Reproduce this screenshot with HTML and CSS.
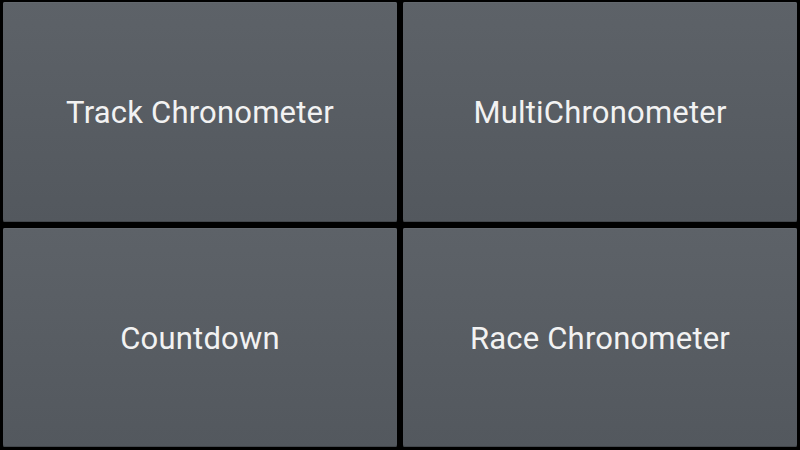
FILE: index.html
```html
<!DOCTYPE html>
<html>
<head>
    <title>Chronometer</title>
    <link rel="stylesheet" href="styles.css">
</head>
<body>
    <div class="menu">
        <button class="tile">Track Chronometer</button>
        <button class="tile">MultiChronometer</button>
        <button class="tile">Countdown</button>
        <button class="tile">Race Chronometer</button>
    </div>
</body>
</html>
```
FILE: styles.css
```css
html, body {
    margin: 0;
    height: 100%;
    background-color: #000;
}

body {
    font-family: Roboto, 'Noto Sans', sans-serif;
    padding: 2px 3px 3px 3px;
    box-sizing: border-box;
}

.menu {
    display: grid;
    grid-template-columns: 1fr 1fr;
    grid-template-rows: 1fr 1fr;
    gap: 6px;
    height: 100%;
}

.tile {
    border: none;
    border-radius: 2px;
    background: linear-gradient(to bottom, #5d6268, #53585e);
    box-shadow: inset 0 -1px 0 #43474c, inset 0 1px 0 #63686e;
    color: #f2f2f2;
    font-family: inherit;
    font-size: 31px;
    letter-spacing: 0.2px;
    padding: 2px 0 0 0;
    cursor: pointer;
}
```
